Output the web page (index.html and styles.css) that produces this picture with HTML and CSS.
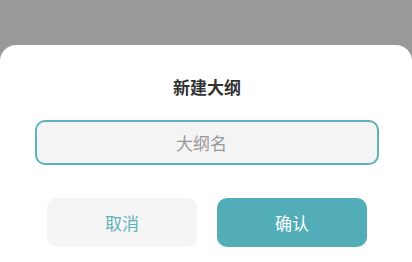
FILE: index.html
```html
<!DOCTYPE html>
<html lang="zh-CN">
<head>
  <meta charset="UTF-8">
  <meta name="viewport" content="width=device-width, initial-scale=1.0">
  <title>新建大纲</title>
  <link rel="stylesheet" href="styles.css">
</head>
<body>
  <div class="mask">
    <div class="sheet">
      <div class="title">新建大纲</div>
      <input type="text" class="nameInput" placeholder="大纲名">
      <div class="btns">
        <div class="btn cancel">取消</div>
        <div class="btn confirm">确认</div>
      </div>
    </div>
  </div>
</body>
</html>
```

FILE: styles.css
```css
*,body{
  margin: 0;
  padding: 0;
  box-sizing: border-box;
}
body{
  width: 412px;
  height: 262px;
  overflow: hidden;
  background: #999;
  font-family: "Noto Sans CJK SC", "Noto Sans", sans-serif;
}
.mask{
  padding-top: 45px;
  height: 262px;
}
.sheet{
  height: 217px;
  background: #fff;
  border-radius: 16px 16px 0 0;
  padding: 30px 33px 0 35px;
}
.sheet .title{
  text-align: center;
  font-size: 17px;
  font-weight: bold;
  line-height: 24px;
  color: #333;
}
.sheet .nameInput{
  display: block;
  width: 344px;
  height: 45px;
  margin-top: 21px;
  border: 2px solid #5fb2ba;
  border-radius: 10px;
  background: #f4f4f4;
  outline: none;
  font-family: inherit;
  font-size: 17px;
  color: #333;
  text-align: center;
  padding: 0 11px 0 0;
}
.sheet .nameInput::placeholder{
  color: #999;
}
.sheet .btns{
  display: flex;
  gap: 20px;
  margin: 33px 0 0 12px;
}
.sheet .btn{
  width: 150px;
  height: 49px;
  line-height: 49px;
  border-radius: 10px;
  text-align: center;
  font-size: 17px;
  cursor: pointer;
}
.sheet .cancel{
  background: #f5f5f5;
  color: #5fb2ba;
}
.sheet .confirm{
  background: #52adb8;
  color: #fff;
}
```
